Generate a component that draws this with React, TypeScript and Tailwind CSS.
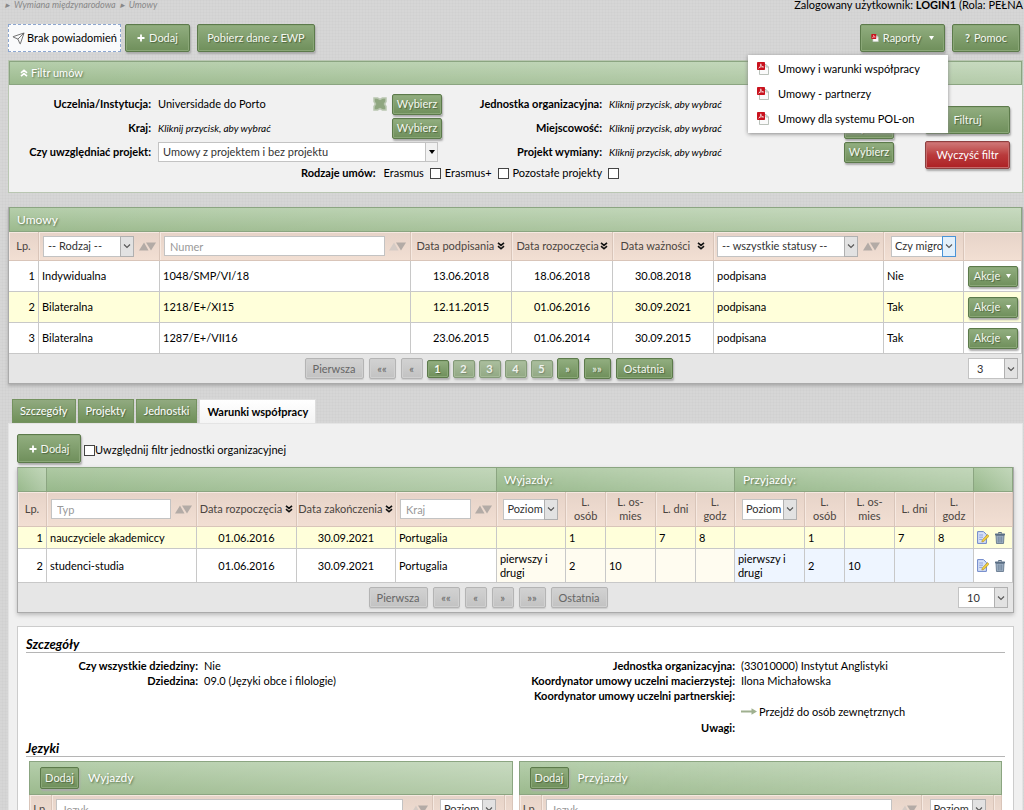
import type { ReactNode } from 'react';
import { Send } from 'lucide-react';

const greenBar = 'bg-[linear-gradient(90deg,#fff0,#ffffff40),linear-gradient(#b5ceab,#9cba8e)] border border-[#8ba581] text-white text-shadow-[1px_1px_2px_#56704a]';
const greenHead = 'border-t border-b border-r border-[#8ba581] bg-[linear-gradient(90deg,#fff0,#ffffff40),linear-gradient(#aec9a3,#98b98c)] text-left font-normal text-white text-[12px] text-shadow-[1px_1px_2px_#56704a]';
const headCell = 'border-r border-b border-[#d9c5b9] bg-linear-to-b from-[#e6d3c8] to-[#f2dfd3] shadow-[inset_1px_1px_0_#f6e9e1] font-normal text-[#4b4541]';
const cell = 'border-r border-b border-[#c8c8c8]';
const field = 'border border-[#c3c3c3] bg-white text-[11px] text-[#333] placeholder:text-[#999] outline-none';

function Button({ children, className = '' }: { children: ReactNode; className?: string }) {
  return (
    <button
      type="button"
      className={`inline-flex shrink-0 items-center justify-center whitespace-nowrap rounded-[2px] border border-[#5c7a4b] bg-linear-to-b from-[#92ae80] to-[#6f8f5b] text-[#f4f8f0] shadow-[inset_0_0_0_1px_#8aa777,1px_2px_2px_#aaa] text-shadow-[1px_1px_1px_#4e6640] ${className}`}
    >
      {children}
    </button>
  );
}

function GreyButton({ children, className = '' }: { children: ReactNode; className?: string }) {
  return (
    <button
      type="button"
      disabled
      className={`inline-flex h-[21px] items-center justify-center rounded-[2px] border border-[#b4b4b4] bg-linear-to-b from-[#d2d2d2] to-[#c2c2c2] text-[#666] shadow-[inset_0_0_0_1px_#d0d0d0,0_1px_1px_#ccc] ${className}`}
    >
      {children}
    </button>
  );
}

function Select({ label, text, className, active = false }: { label: string; text: string; className: string; active?: boolean }) {
  return (
    <span className={`relative inline-flex align-middle ${className}`}>
      <select aria-label={label} className={`${field} h-[21px] w-full appearance-none rounded-none pl-1 pr-[12px]`}>
        <option>{text}</option>
      </select>
      <span
        className={`pointer-events-none absolute inset-y-0 right-0 flex w-[14px] items-center justify-center border ${
          active ? 'border-[#4a93d6] bg-[#e3f0fb]' : 'border-[#b0b0b0] bg-[#e2e2e2]'
        }`}
      >
        <svg width="8" height="6" viewBox="0 0 8 6" fill="none" stroke="#555" strokeWidth="1.1">
          <path d="M1 1.5 4 4.5 7 1.5" />
        </svg>
      </span>
    </span>
  );
}

function SortIcon({ faded = false }: { faded?: boolean }) {
  return (
    <svg className="shrink-0" width="17" height="9" viewBox="0 0 17 9">
      <path d="M0 8.5 5 .5 9.5 8.5Z" fill={faded ? '#d5cbc5' : '#b3aba6'} />
      <path d="M7 .5H17L12 8.5Z" fill="#b3aba6" />
    </svg>
  );
}

function DownIcon({ up = false, color = '#111' }: { up?: boolean; color?: string }) {
  return (
    <svg className={up ? 'shrink-0 rotate-180' : 'shrink-0'} width="8" height="8" viewBox="0 0 8 8" fill="none" stroke={color} strokeWidth="1.6">
      <path d="M1 .8 4 3.4 7 .8M1 4.2 4 6.8 7 4.2" />
    </svg>
  );
}

function PlusIcon() {
  return (
    <svg width="8" height="8" viewBox="0 0 8 8" stroke="#fff" strokeWidth="1.8">
      <path d="M4 .5V7.5M.5 4H7.5" />
    </svg>
  );
}

function Caret() {
  return (
    <svg width="5" height="4" viewBox="0 0 5 4" fill="#fff">
      <path d="M0 0H5L2.5 4Z" />
    </svg>
  );
}

function PdfIcon({ small = false }: { small?: boolean }) {
  return (
    <svg className="shrink-0" width={small ? 8 : 12} height={small ? 8 : 13} viewBox="0 0 12 13">
      <path d="M2.5 2.5H9L11.5 5V12.5H2.5Z" fill="#fafafa" stroke="#a9b3a9" strokeWidth=".8" />
      <path d="M9 2.5V5H11.5" fill="none" stroke="#a9b3a9" strokeWidth=".8" />
      <rect width="8" height="8" rx=".8" fill="#c9131e" />
      <path d="M1.5 6.3C3 5.5 4 3.5 3.8 1.6M3.8 2.2C4.2 4 5.2 5 6.7 5M2.2 5.6C3.5 4.8 5 4.7 6.5 5" fill="none" stroke="#fff" strokeWidth=".7" />
    </svg>
  );
}

function ClearIcon() {
  return (
    <svg className="mr-1 shrink-0" width="16" height="16" viewBox="0 0 16 16">
      <path d="M2 2H5.5L8 3.5 10.5 2H14V5.5L12.5 8 14 10.5V14H10.5L8 12.5 5.5 14H2V10.5L3.5 8 2 5.5Z" fill="#8fa680" stroke="#b9c6b0" strokeWidth="1.5" />
    </svg>
  );
}

function EditIcon() {
  return (
    <svg width="12" height="13" viewBox="0 0 12 13">
      <path d="M.6.6H6.5L9.4 3.5V12.4H.6Z" fill="#d5e0f8" stroke="#6d86c9" strokeWidth="1" />
      <path d="M2.2 4H6M2.2 6.2H6M2.2 8.4H5" stroke="#8fa4dd" />
      <path d="M10.5 3.5 12 5.2 6.8 10.5 4.8 11 5.3 8.9Z" fill="#f2cf3b" stroke="#a8892c" strokeWidth=".6" />
    </svg>
  );
}

function TrashIcon() {
  return (
    <svg width="10" height="12" viewBox="0 0 10 12">
      <path d="M3.5 1.5V.5H6.5V1.5" fill="none" stroke="#5b6f85" />
      <rect y="1.5" width="10" height="2" rx=".5" fill="#5b6f85" />
      <path d="M1 3.5H9L8.5 11.5H1.5Z" fill="#9fb1c5" stroke="#5b6f85" strokeWidth=".8" />
      <path d="M3.3 4.5V10.5M5 4.5V10.5M6.7 4.5V10.5" stroke="#5b6f85" strokeWidth=".6" />
    </svg>
  );
}

function FilterField({ label, button = true, clear = false, children }: { label: string; button?: boolean; clear?: boolean; children: ReactNode }) {
  return (
    <div className="flex h-6 items-center">
      <span className="w-[142px] shrink-0 text-right font-bold">{label}</span>
      <div className="ml-[7px] flex min-w-0 flex-1 items-center">{children}</div>
      {clear && <ClearIcon />}
      {button && <Button className="h-[21px] w-[50px]">Wybierz</Button>}
    </div>
  );
}

const hint = <em className="text-[10px]">Kliknij przycisk, aby wybrać</em>;

const agreements = [
  { type: 'Indywidualna', number: '1048/SMP/VI/18', signed: '13.06.2018', from: '18.06.2018', to: '30.08.2018', migrated: 'Nie' },
  { type: 'Bilateralna', number: '1218/E+/XI15', signed: '12.11.2015', from: '01.06.2016', to: '30.09.2021', migrated: 'Tak' },
  { type: 'Bilateralna', number: '1287/E+/VII16', signed: '23.06.2015', from: '01.06.2014', to: '30.09.2015', migrated: 'Tak' },
];

const conditions = [
  { type: 'nauczyciele akademiccy', values: ['', '1', '', '7', '8'] },
  { type: 'studenci-studia', values: ['pierwszy i drugi', '2', '10', '', ''] },
];

function Toolbar() {
  return (
    <div className="flex h-7 items-center">
      <div className="flex h-7 w-[113px] items-center justify-center gap-[2px] whitespace-nowrap border border-dashed border-[#8ca6cf] bg-[#f9fafb]">
        <Send size={13} strokeWidth={1.5} className="text-[#555]" />
        Brak powiadomień
      </div>
      <Button className="ml-1 h-7 w-[65px] gap-1"><PlusIcon />Dodaj</Button>
      <Button className="ml-[7px] h-7 w-[118px]">Pobierz dane z EWP</Button>
      <div className="relative ml-auto flex">
        <Button className="h-7 w-[85px] gap-1"><PdfIcon small />Raporty<span className="ml-1"><Caret /></span></Button>
        <ul className="absolute top-[31px] right-[-3px] z-10 w-[200px] bg-white pt-px pb-[2px] shadow-[0_1px_4px_#888]">
          {['Umowy i warunki współpracy', 'Umowy - partnerzy', 'Umowy dla systemu POL-on'].map((item) => (
            <li key={item}>
              <a href="#" className="flex h-[25px] items-center gap-[9px] pl-[9px]"><PdfIcon />{item}</a>
            </li>
          ))}
        </ul>
      </div>
      <Button className="mr-[3px] ml-[7px] h-7 w-[68px] gap-1"><b>?</b>Pomoc</Button>
    </div>
  );
}

function FilterPanel() {
  return (
    <section className="mt-2 border border-[#b9c6b2] bg-[#f1f1f1]">
      <h2 className={`flex h-6 items-center gap-[3px] pl-[10px] text-[11px] ${greenBar}`}>
        <DownIcon up color="#fff" />Filtr umów
      </h2>
      <div className="flex pt-[7px] pr-3">
        <div className="w-[433px] shrink-0">
          <FilterField label="Uczelnia/Instytucja:" clear>Universidade do Porto</FilterField>
          <FilterField label="Kraj:">{hint}</FilterField>
          <FilterField label="Czy uwzględniać projekt:" button={false}>
            <span className="relative mr-1 flex w-full">
              <select aria-label="Czy uwzględniać projekt" className={`${field} h-5 w-full appearance-none rounded-none pl-1`}>
                <option>Umowy z projektem i bez projektu</option>
              </select>
              <span className="pointer-events-none absolute inset-y-0 right-0 flex w-[13px] items-center justify-center border border-[#c3c3c3] bg-[#f1f1f1]">
                <svg width="6" height="4" viewBox="0 0 6 4"><path d="M0 0H6L3 4Z" /></svg>
              </span>
            </span>
          </FilterField>
        </div>
        <div className="ml-[18px] min-w-0 flex-1">
          <FilterField label="Jednostka organizacyjna:">{hint}</FilterField>
          <FilterField label="Miejscowość:">{hint}</FilterField>
          <FilterField label="Projekt wymiany:">{hint}</FilterField>
        </div>
        <div className="ml-[31px] flex flex-col gap-[7px] pt-[14px]">
          <Button className="h-7 w-[85px]">Filtruj</Button>
          <button type="button" className="h-7 w-[85px] rounded-[2px] border border-[#8d4040] bg-linear-to-b from-[#cf7a7a] via-[#b93a3c] via-50% to-[#ad1f23] text-white shadow-[inset_0_0_0_1px_#c66a6a,1px_2px_2px_#aaa]">
            Wyczyść filtr
          </button>
        </div>
      </div>
      <div className="-mt-[7px] flex h-[22px] items-center pl-[292px]">
        <b className="mr-2">Rodzaje umów:</b>
        {['Erasmus', 'Erasmus+', 'Pozostałe projekty'].map((name) => (
          <label key={name} className="mr-1 flex items-center gap-[6px]">
            {name}
            <input type="checkbox" className="size-[11px] appearance-none border border-[#444] bg-white" />
          </label>
        ))}
      </div>
      <div className="h-2" />
    </section>
  );
}

function AgreementsTable() {
  return (
    <section className="mt-[14px] border-x border-b border-[#aaa] bg-[#e6e6e6] shadow-[0_2px_3px_#aaa]">
      <h2 className={`flex h-[25px] items-center pl-[7px] text-[12px] ${greenBar}`}>Umowy</h2>
      <table className="w-full table-fixed border-separate border-spacing-0">
        <colgroup>
          <col className="w-[30px]" /><col className="w-[121px]" /><col /><col className="w-[101px]" /><col className="w-[101px]" />
          <col className="w-[101px]" /><col className="w-[170px]" /><col className="w-[80px]" /><col className="w-[58px]" />
        </colgroup>
        <thead>
          <tr className="h-[29px]">
            <th className={headCell}>Lp.</th>
            <th className={headCell}><div className="flex items-center gap-[5px] pl-1"><Select label="Rodzaj" text="-- Rodzaj --" className="w-[91px]" /><SortIcon /></div></th>
            <th className={headCell}><div className="flex items-center gap-1 px-1"><input aria-label="Numer" placeholder="Numer" className={`${field} h-5 min-w-0 flex-1 px-[5px]`} /><SortIcon faded /></div></th>
            {['Data podpisania', 'Data rozpoczęcia', 'Data ważności'].map((name) => (
              <th key={name} className={headCell}><div className="flex items-center justify-around whitespace-nowrap px-1">{name}<DownIcon /></div></th>
            ))}
            <th className={headCell}><div className="flex items-center gap-[5px] pl-[3px]"><Select label="Status" text="-- wszystkie statusy --" className="w-[141px]" /><SortIcon /></div></th>
            <th className={headCell}><Select label="Czy migrowana" text="Czy migrowana" className="w-[65px] [&>select]:pl-[3px]" active /></th>
            <th className={headCell} />
          </tr>
        </thead>
        <tbody>
          {agreements.map((row, i) => (
            <tr key={row.number} className={`h-[31px] ${i === 1 ? 'bg-[#ffffda]' : 'bg-white'}`}>
              <td className={`${cell} pr-[3px] text-right`}>{i + 1}</td>
              <td className={`${cell} pl-[3px]`}>{row.type}</td>
              <td className={`${cell} pl-[3px]`}>{row.number}</td>
              <td className={`${cell} text-center`}>{row.signed}</td>
              <td className={`${cell} text-center`}>{row.from}</td>
              <td className={`${cell} text-center`}>{row.to}</td>
              <td className={`${cell} pl-[3px]`}>podpisana</td>
              <td className={`${cell} pl-[3px]`}>{row.migrated}</td>
              <td className={`${cell} text-center`}><Button className="h-[21px] w-[50px] gap-[6px] align-middle">Akcje<Caret /></Button></td>
            </tr>
          ))}
        </tbody>
      </table>
      <div className="flex h-[29px] items-center px-1">
        <div className="mr-1 flex flex-1 items-center justify-center">
          <GreyButton className="w-[59px]">Pierwsza</GreyButton>
          <GreyButton className="ml-[5px] w-[27px]">««</GreyButton>
          <GreyButton className="ml-[5px] w-[22px]">«</GreyButton>
          <div className="mx-1 flex gap-1">
            {[1, 2, 3, 4, 5].map((n) => (
              <Button key={n} className={`h-[18px] w-[22px] font-bold ${n === 1 ? '' : 'opacity-70'}`}>{n}</Button>
            ))}
          </div>
          <Button className="h-[21px] w-[22px]">»</Button>
          <Button className="ml-[5px] h-[21px] w-[27px]">»»</Button>
          <Button className="ml-[5px] h-[21px] w-[57px]">Ostatnia</Button>
        </div>
        <Select label="Liczba wierszy" text="3" className="w-[50px] [&>select]:pl-2" />
      </div>
    </section>
  );
}

function LevelHeads({ label }: { label: string }) {
  return (
    <>
      <th className={headCell}><Select label={label} text="Poziom" className="w-[55px] [&>select]:pl-[3px]" /></th>
      <th className={`${headCell} px-2`}>L. osób</th>
      <th className={`${headCell} px-2`}>L. os-mies</th>
      <th className={headCell}>L. dni</th>
      <th className={`${headCell} px-1`}>L.<br />godz</th>
    </>
  );
}

function ConditionsTable() {
  return (
    <div className="border border-[#aaa] border-t-0 bg-[#e6e6e6] shadow-[0_2px_4px_#bbb]">
      <table className="w-full table-fixed border-separate border-spacing-0">
        <colgroup>
          <col className="w-[29px]" /><col /><col className="w-[100px]" /><col className="w-[99px]" /><col className="w-[101px]" />
          <col className="w-[69px]" /><col className="w-[40px]" /><col className="w-[50px]" /><col className="w-[40px]" /><col className="w-[39px]" />
          <col className="w-[70px]" /><col className="w-[40px]" /><col className="w-[50px]" /><col className="w-[40px]" /><col className="w-[39px]" />
          <col className="w-[39px]" />
        </colgroup>
        <thead>
          <tr className="h-[25px]">
            <th className={greenHead} />
            <th colSpan={4} className={greenHead} />
            <th colSpan={5} className={`${greenHead} pl-[7px]`}>Wyjazdy:</th>
            <th colSpan={5} className={`${greenHead} pl-2`}>Przyjazdy:</th>
            <th className={greenHead} />
          </tr>
          <tr className="h-[35px] leading-[14px]">
            <th className={headCell}>Lp.</th>
            <th className={headCell}><div className="flex items-center gap-1 px-1"><input aria-label="Typ" placeholder="Typ" className={`${field} h-5 min-w-0 flex-1 px-[5px]`} /><SortIcon /></div></th>
            {['Data rozpoczęcia', 'Data zakończenia'].map((name) => (
              <th key={name} className={headCell}><div className="flex items-center justify-center gap-[3px] whitespace-nowrap">{name}<DownIcon /></div></th>
            ))}
            <th className={headCell}><div className="flex items-center gap-1 px-1"><input aria-label="Kraj" placeholder="Kraj" className={`${field} h-5 min-w-0 flex-1 px-[5px]`} /><SortIcon /></div></th>
            <LevelHeads label="Poziom wyjazdów" />
            <LevelHeads label="Poziom przyjazdów" />
            <th className={headCell} />
          </tr>
        </thead>
        <tbody className="leading-[14px]">
          {conditions.map((row, i) => (
            <tr key={row.type} className={i === 0 ? 'h-[22px] bg-[#ffffda]' : 'h-[34px] bg-white'}>
              <td className={`${cell} pr-[3px] text-right`}>{i + 1}</td>
              <td className={`${cell} pl-[3px]`}>{row.type}</td>
              <td className={`${cell} text-center`}>01.06.2016</td>
              <td className={`${cell} text-center`}>30.09.2021</td>
              <td className={`${cell} pl-[3px]`}>Portugalia</td>
              {row.values.map((value, n) => (
                <td key={n} className={`${cell} pl-[3px] ${i ? 'bg-[#fffcf0]' : ''}`}>{value}</td>
              ))}
              {row.values.map((value, n) => (
                <td key={n} className={`${cell} pl-[3px] ${i ? 'bg-[#eef5ff]' : ''}`}>{value}</td>
              ))}
              <td className={cell}>
                <div className="flex items-center gap-[6px] pl-[3px]">
                  <button type="button" aria-label="Edytuj"><EditIcon /></button>
                  <button type="button" aria-label="Usuń"><TrashIcon /></button>
                </div>
              </td>
            </tr>
          ))}
        </tbody>
      </table>
      <div className="flex h-[29px] items-center pr-[5px]">
        <div className="flex flex-1 items-center justify-center gap-[5px]">
          <GreyButton className="w-[59px]">Pierwsza</GreyButton>
          <GreyButton className="w-[27px]">««</GreyButton>
          <GreyButton className="w-[22px]">«</GreyButton>
          <GreyButton className="w-[22px]">»</GreyButton>
          <GreyButton className="w-[27px]">»»</GreyButton>
          <GreyButton className="w-[57px]">Ostatnia</GreyButton>
        </div>
        <Select label="Liczba wierszy" text="10" className="w-[50px] [&>select]:pl-2" />
      </div>
    </div>
  );
}

function LanguageTable({ title }: { title: string }) {
  return (
    <div className="min-w-0 flex-1">
      <div className={`flex h-[34px] items-center gap-[9px] pl-[10px] text-[12px] ${greenBar}`}>
        <Button className="h-[22px] w-[39px] text-[11px]">Dodaj</Button>
        {title}
      </div>
      <table className="w-full table-fixed border-separate border-spacing-0 border-l border-[#d9c5b9]">
        <colgroup><col className="w-[22px]" /><col /><col className="w-[72px]" /><col className="w-[8px]" /></colgroup>
        <thead>
          <tr className="h-[29px]">
            <th className={headCell}>Lp.</th>
            <th className={headCell}><div className="flex items-center gap-2 px-1"><input aria-label={`Język ${title}`} placeholder="Język" className={`${field} h-5 min-w-0 flex-1 px-[5px]`} /><SortIcon faded /></div></th>
            <th className={headCell}><Select label={`Poziom ${title}`} text="Poziom" className="w-[56px] [&>select]:pl-[3px]" /></th>
            <th className={headCell} />
          </tr>
        </thead>
      </table>
    </div>
  );
}

function Details() {
  return (
    <section className="mt-[13px] border border-[#ccc] bg-white px-2 pt-[9px]">
      <h3 className="h-[17px] border-b border-[#b5b5b5] text-[13px] leading-4 font-bold italic">Szczegóły</h3>
      <div className="flex pt-[5px] leading-[15px]">
        <dl className="grid w-[484px] grid-cols-[172px_1fr] content-start gap-x-[6px]">
          <dt className="text-right font-bold">Czy wszystkie dziedziny:</dt><dd>Nie</dd>
          <dt className="text-right font-bold">Dziedzina:</dt><dd>09.0 (Języki obce i filologie)</dd>
        </dl>
        <dl className="grid flex-1 grid-cols-[225px_1fr] gap-x-[6px]">
          <dt className="text-right font-bold">Jednostka organizacyjna:</dt><dd>(33010000) Instytut Anglistyki</dd>
          <dt className="text-right font-bold">Koordynator umowy uczelni macierzystej:</dt><dd>Ilona Michałowska</dd>
          <dt className="text-right font-bold">Koordynator umowy uczelni partnerskiej:</dt><dd />
          <dt />
          <dd>
            <a href="#" className="flex h-[17px] items-center gap-[2px]">
              <svg width="16" height="7" viewBox="0 0 16 7"><path d="M0 2.5H10.5V.3L16 3.5 10.5 6.7V4.5H0Z" fill="#9fb08f" /></svg>
              Przejdź do osób zewnętrznych
            </a>
          </dd>
          <dt className="text-right font-bold">Uwagi:</dt><dd />
        </dl>
      </div>
      <h3 className="mt-[5px] h-[17px] border-b border-[#b5b5b5] text-[13px] leading-4 font-bold italic">Języki</h3>
      <div className="mt-1 flex gap-[6px] pr-[3px] pl-[3px]">
        <LanguageTable title="Wyjazdy" />
        <LanguageTable title="Przyjazdy" />
      </div>
    </section>
  );
}

export default function App() {
  return (
    <main className="h-screen overflow-hidden bg-[#d6d6d6] bg-[repeating-linear-gradient(0deg,#0000_0_2px,#00000004_2px_3px),repeating-linear-gradient(90deg,#0000_0_2px,#00000004_2px_3px)] pr-px pl-2 font-['Lato',sans-serif] text-[11px] leading-4 text-black">
      <header className="flex h-6 justify-between leading-[10px]">
        <nav className="flex gap-1 text-[9px] text-[#888] italic">
          <span className="-ml-[3px]">▸</span><a href="#">Wymiana międzynarodowa</a><span>▸</span><a href="#">Umowy</a>
        </nav>
        <p className="whitespace-nowrap">Zalogowany użytkownik: <b>LOGIN1</b> (Rola: PEŁNA</p>
      </header>
      <Toolbar />
      <FilterPanel />
      <AgreementsTable />
      <nav className="mt-[15px] flex gap-[2px] pl-1">
        {['Szczegóły', 'Projekty', 'Jednostki'].map((tab) => (
          <button key={tab} type="button" className="h-6 border border-[#74925f] bg-linear-to-b from-[#91aa80] to-[#6f9059] px-[7px] text-white text-shadow-[1px_1px_1px_#4e6640]">{tab}</button>
        ))}
        <button type="button" className="h-6 border border-b-0 border-[#ddd] bg-linear-to-b from-white to-[#f4f4f4] px-[7px] font-bold">Warunki współpracy</button>
      </nav>
      <section className="border border-[#e4e4e4] bg-[#f0f0f0] px-2 pt-[10px] pb-4">
        <div className="flex h-[33px] items-start">
          <Button className="h-[29px] w-[64px] gap-1"><PlusIcon />Dodaj</Button>
          <label className="ml-[3px] flex h-8 items-center">
            <input type="checkbox" className="size-[11px] appearance-none border border-[#444] bg-white" />
            Uwzględnij filtr jednostki organizacyjnej
          </label>
        </div>
        <ConditionsTable />
        <Details />
      </section>
    </main>
  );
}
